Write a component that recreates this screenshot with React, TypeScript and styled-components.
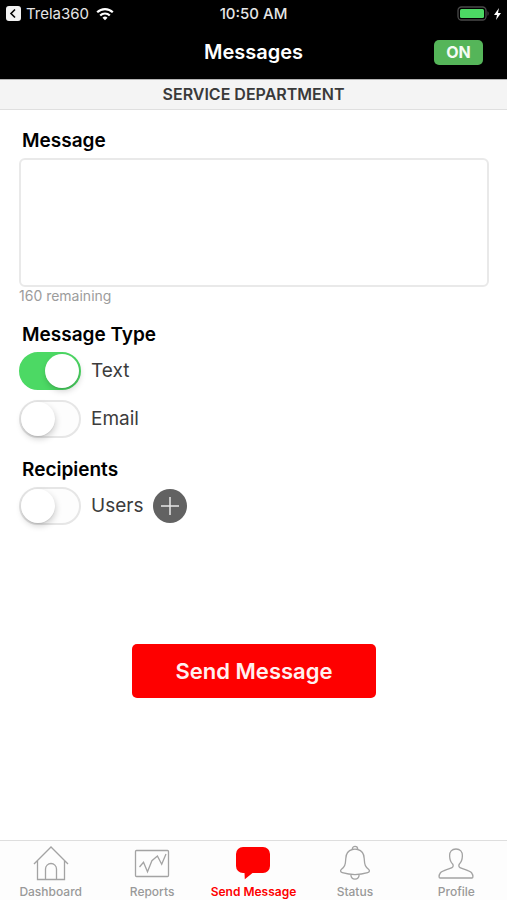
import React, { useState } from "react";
import styled, { createGlobalStyle } from "styled-components";

const GlobalStyle = createGlobalStyle`
  *, *::before, *::after { box-sizing: border-box; }
  body {
    margin: 0;
    background: #fff;
    color: #000;
    font-family: Inter, "Liberation Sans", sans-serif;
  }
  button, textarea { font-family: inherit; }
`;

const Screen = styled.div`
  display: flex;
  flex-direction: column;
  min-height: 100vh;
`;

const StatusBar = styled.div`
  display: grid;
  grid-template-columns: 1fr auto 1fr;
  align-items: center;
  height: 27px;
  padding: 0 6px;
  background: #000;
  color: #e6e6e6;
  font-size: 15px;
  line-height: 20px;
`;

const StatusSide = styled.div<{ $end?: boolean }>`
  display: flex;
  align-items: center;
  justify-content: ${(p) => (p.$end ? "flex-end" : "flex-start")};
  gap: ${(p) => (p.$end ? 4 : 3)}px;
`;

const BackLink = styled.a`
  display: flex;
  align-items: center;
  gap: 5px;
  color: inherit;
  text-decoration: none;
`;

const Clock = styled.time`
  font-weight: 500;
`;

const NavBar = styled.header`
  display: grid;
  grid-template-columns: 1fr auto 1fr;
  align-items: center;
  height: 52px;
  padding: 0 24px 2px;
  background: #000;
`;

const Title = styled.h1`
  grid-column: 2;
  margin: 0;
  color: #fff;
  font-size: 20px;
  font-weight: 600;
  line-height: 24px;
`;

const OnButton = styled.button`
  justify-self: end;
  width: 49px;
  height: 25px;
  padding: 0;
  border: 0;
  border-radius: 5px;
  background: #55b559;
  color: #f4fbf4;
  font-size: 16px;
  font-weight: 700;
  line-height: 24px;
`;

const Department = styled.h2`
  margin: 0;
  height: 31px;
  border-top: 1px solid #b4b4b4;
  border-bottom: 1px solid #dfdfdf;
  background: #f4f4f4;
  color: #3a3a3a;
  font-size: 16px;
  font-weight: 600;
  line-height: 28px;
  text-align: center;
`;

const Form = styled.form`
  display: flex;
  flex-direction: column;
  flex: 1;
  padding: 19px 18px 32px 19px;
`;

const Group = styled.fieldset`
  min-width: 0;
  margin: 19px 0 0;
  padding: 0;
  border: 0;
`;

const Heading = styled.legend`
  display: block;
  padding: 0 3px;
  margin-bottom: 5px;
  font-size: 19px;
  font-weight: 600;
  line-height: 24px;
`;

const MessageBox = styled.textarea`
  display: block;
  width: 100%;
  height: 129px;
  padding: 8px 10px;
  border: 2px solid #e9e9e9;
  border-radius: 6px;
  background: #fff;
  font-size: 18px;
  line-height: 24px;
  resize: none;
  outline-color: #c8c8c8;
`;

const Remaining = styled.p`
  margin: 0;
  color: #9c9c9c;
  font-size: 14px;
  line-height: 17px;
`;

const Row = styled.div`
  display: flex;
  align-items: center;
  gap: 10px;
  height: 38px;
  & + & { margin-top: 10px; }
  &:last-child { margin-bottom: 1px; }
`;

const RowLabel = styled.label`
  display: flex;
  align-items: center;
  gap: 10px;
  color: #3c3c3c;
  font-size: 19px;
  line-height: 24px;
`;

const Switch = styled.input`
  appearance: none;
  display: flex;
  align-items: center;
  width: 62px;
  height: 38px;
  margin: 0;
  border: 2px solid #e6e6e6;
  border-radius: 19px;
  background: #fdfdfd;

  &::before {
    content: "";
    width: 34px;
    height: 34px;
    border-radius: 50%;
    background: #fff;
    box-shadow: 1px 3px 6px rgba(0, 0, 0, 0.18), 0 1px 1px rgba(0, 0, 0, 0.08);
  }

  &:checked {
    justify-content: flex-end;
    border-color: #4cd964;
    background: #4cd964;
  }
`;

const AddButton = styled.button`
  display: flex;
  align-items: center;
  justify-content: center;
  width: 34px;
  height: 34px;
  padding: 0;
  border: 0;
  border-radius: 50%;
  background: #626262;
`;

const SendButton = styled.button`
  align-self: center;
  width: 52%;
  height: 54px;
  margin-top: 118px;
  border: 0;
  border-radius: 5px;
  background: #fe0000;
  color: #fff0f0;
  font-size: 22px;
  font-weight: 600;
  line-height: 28px;
`;

const TabBar = styled.nav`
  display: grid;
  grid-template-columns: repeat(5, 1fr);
  height: 60px;
  border-top: 1px solid #dedede;
  background: #fdfdfd;
`;

const Tab = styled.a<{ $active?: boolean }>`
  display: flex;
  flex-direction: column;
  align-items: center;
  padding-top: 4px;
  color: ${(p) => (p.$active ? "#fe0000" : "#999")};
  font-size: 12px;
  font-weight: ${(p) => (p.$active ? 600 : 500)};
  line-height: 16px;
  text-decoration: none;
  white-space: nowrap;

  svg { margin-bottom: 3px; }
`;

const line = {
  width: 36,
  height: 36,
  viewBox: "0 0 36 36",
  fill: "none",
  stroke: "#a3a3a3",
  strokeWidth: 1.3,
  "aria-hidden": true,
} as const;

const tabs = [
  {
    name: "Dashboard",
    icon: (
      <svg {...line}>
        <path d="M1 19 18 2l17 17M4.500 15.500v19h27v-19M12.500 34.500V24a5.500 5.500 0 0 1 11 0v10.500" />
      </svg>
    ),
  },
  {
    name: "Reports",
    icon: (
      <svg {...line}>
        <rect x="1.500" y="5.500" width="33" height="26" rx="1" />
        <path d="m5.500 22 4-4.700 4 9.400 4.400-11 5.500-4.700 4.300 8.300L32 9" />
      </svg>
    ),
  },
  {
    name: "Send Message",
    icon: (
      <svg {...line} fill="#fe0000" stroke="none">
        <path d="M8 2h20a7 7 0 0 1 7 7v12a7 7 0 0 1-7 7H17.500L9.800 34.200 9.500 28H8a7 7 0 0 1-7-7V9a7 7 0 0 1 7-7Z" />
      </svg>
    ),
  },
  {
    name: "Status",
    icon: (
      <svg {...line}>
        <path d="M15.300 4.500V4a2.700 2.700 0 0 1 5.400 0v.5M15.300 4.500C11 5.500 9 9 8.800 13.500 8.500 20 7.500 22 4.500 24.300c-1.500 1.200-1.200 2.800.8 3.400 7.600 2.200 17.800 2.200 25.400 0 2-.6 2.300-2.200.8-3.400-3-2.300-4-4.300-4.300-10.800C27 9 25 5.500 20.700 4.500c-1.700-.4-3.700-.4-5.400 0ZM13.800 29.500c.2 2.800 1.800 4.700 4.200 4.700s4-1.900 4.200-4.700" />
      </svg>
    ),
  },
  {
    name: "Profile",
    icon: (
      <svg {...line}>
        <path d="M18 4c-4.200 0-6.600 2.600-6.400 6.800.1 3.200 1 6.400 3 8.200.9 1.200.8 2.800-.6 3.600C10.500 24.500 4.500 25.300 2.300 28c-.9 1.200-1.300 2.600-1.200 4 0 .8.400 1 1 1h31.800c.6 0 1-.2 1-1 .1-1.400-.3-2.800-1.200-4-2.200-2.700-8.200-3.500-11.700-5.400-1.400-.8-1.500-2.400-.6-3.600 2-1.800 2.900-5 3-8.200C24.600 6.600 22.200 4 18 4Z" />
      </svg>
    ),
  },
];

const LIMIT = 160;

export default function App() {
  const [message, setMessage] = useState("");

  return (
    <Screen>
      <GlobalStyle />
      <StatusBar>
        <StatusSide>
          <BackLink href="#">
            <svg width="15" height="15" viewBox="0 0 15 15" aria-hidden="true">
              <rect width="15" height="15" rx="3" fill="#f2f2f2" />
              <path d="M9 3.500 5 7.500l4 4" fill="none" stroke="#000" strokeWidth="1.600" />
            </svg>
            Trela360
          </BackLink>
          <svg width="26" height="14" viewBox="0 0 26 14" fill="none" stroke="#fff" strokeWidth="2.200" aria-hidden="true">
            <path d="M5.200 5.300a11 11 0 0 1 15.600 0M8.200 8.500a6.800 6.800 0 0 1 9.600 0" />
            <path d="M13 13.300 10.500 10.800a3.500 3.500 0 0 1 5 0Z" fill="#fff" stroke="none" />
          </svg>
        </StatusSide>
        <Clock>10:50 AM</Clock>
        <StatusSide $end>
          <svg width="33" height="15" viewBox="0 0 33 15" aria-hidden="true">
            <rect x="1" y="1" width="28" height="13" rx="3.500" fill="none" stroke="#4a4a4a" strokeWidth="1.300" />
            <rect x="3" y="3" width="24" height="9" rx="1.500" fill="#4cd964" />
            <path d="M30.500 5.200c1.500.6 1.500 4 0 4.600Z" fill="#4a4a4a" />
          </svg>
          <svg width="7" height="12" viewBox="0 0 7 12" aria-hidden="true">
            <path d="M5 0 0 7h3L2 12l5-7H4Z" fill="#fff" />
          </svg>
        </StatusSide>
      </StatusBar>
      <NavBar>
        <Title>Messages</Title>
        <OnButton type="button">ON</OnButton>
      </NavBar>
      <Department>SERVICE DEPARTMENT</Department>
      <Form onSubmit={(e) => e.preventDefault()}>
        <Heading as="label" htmlFor="message">
          Message
        </Heading>
        <MessageBox
          id="message"
          maxLength={LIMIT}
          value={message}
          onChange={(e) => setMessage(e.target.value)}
        />
        <Remaining>{LIMIT - message.length} remaining</Remaining>
        <Group>
          <Heading>Message Type</Heading>
          <Row>
            <RowLabel>
              <Switch type="checkbox" role="switch" defaultChecked />
              Text
            </RowLabel>
          </Row>
          <Row>
            <RowLabel>
              <Switch type="checkbox" role="switch" />
              Email
            </RowLabel>
          </Row>
        </Group>
        <Group>
          <Heading>Recipients</Heading>
          <Row>
            <RowLabel>
              <Switch type="checkbox" role="switch" />
              Users
            </RowLabel>
            <AddButton type="button" aria-label="Add users">
              <svg width="20" height="20" viewBox="0 0 20 20" stroke="#e8e8e8" strokeWidth="1.500" aria-hidden="true">
                <path d="M10 1v18M1 10h18" />
              </svg>
            </AddButton>
          </Row>
        </Group>
        <SendButton type="submit">Send Message</SendButton>
      </Form>
      <TabBar>
        {tabs.map((tab) => {
          const active = tab.name === "Send Message";
          return (
            <Tab key={tab.name} href="#" $active={active} aria-current={active ? "page" : undefined}>
              {tab.icon}
              {tab.name}
            </Tab>
          );
        })}
      </TabBar>
    </Screen>
  );
}
